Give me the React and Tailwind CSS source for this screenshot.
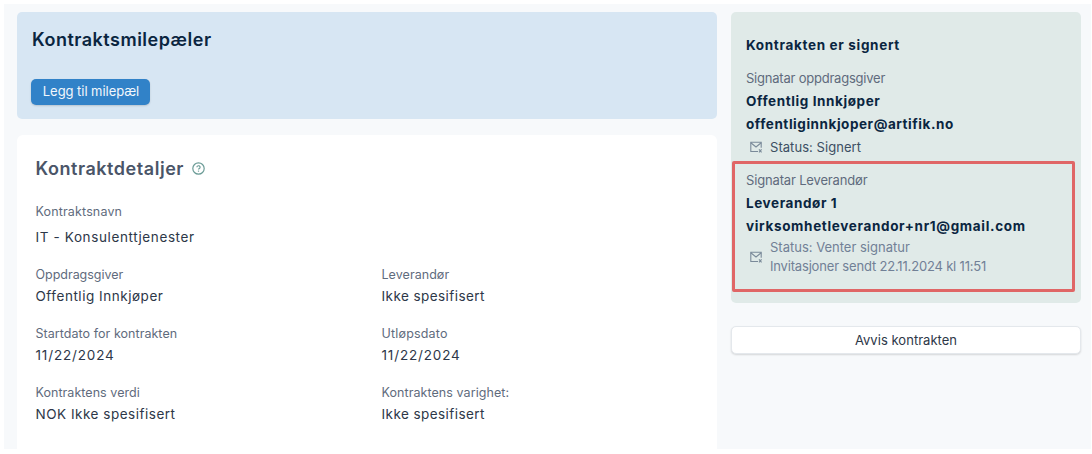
import clsx from "clsx";

const DETAILS = [
  {
    label: "Oppdragsgiver",
    labelClass: "tracking-[-0.02px]",
    value: "Offentlig Innkjøper",
    valueClass: "tracking-[0.53px]",
  },
  {
    label: "Leverandør",
    labelClass: "tracking-[0.05px]",
    value: "Ikke spesifisert",
    valueClass: "tracking-[0.43px]",
  },
  {
    label: "Startdato for kontrakten",
    labelClass: "tracking-[0.05px]",
    value: "11/22/2024",
    valueClass: "tracking-[0.85px]",
  },
  {
    label: "Utløpsdato",
    labelClass: "tracking-[0.18px]",
    value: "11/22/2024",
    valueClass: "tracking-[0.85px]",
  },
  {
    label: "Kontraktens verdi",
    labelClass: "tracking-[0.05px]",
    value: "NOK Ikke spesifisert",
    valueClass: "tracking-[0.51px]",
  },
  {
    label: "Kontraktens varighet:",
    labelClass: "tracking-[0.07px]",
    value: "Ikke spesifisert",
    valueClass: "tracking-[0.43px]",
  },
];

export default function App() {
  return (
    <div className="h-[454px] w-[1092px] overflow-hidden bg-white pt-1 pl-1 font-['Inter',sans-serif]">
      <div className="flex h-[445px] w-[1087px] gap-[14px] bg-[#f7f9fb] pt-2 pl-[13px]">
        <main className="flex w-[700px] flex-col gap-4">
          <Milestones />
          <ContractDetails />
        </main>
        <aside className="w-[350px]">
          <Signatures />
          <button className="mt-[23px] flex h-7 w-full items-center justify-center rounded-[5px] border border-[#e4e8ec] bg-white pt-px text-[13px] tracking-[0.03px] text-[#2d3748] shadow-[0_1px_2px_rgba(0,0,0,0.14)]">
            <span>Avvis kontrakten</span>
          </button>
        </aside>
      </div>
    </div>
  );
}

function Milestones() {
  return (
    <section className="h-[107px] rounded-[5px] bg-[#d7e6f3] pt-4 pl-[14px]">
      <h2 className="pl-px text-[18px] leading-6 font-semibold tracking-[0.5px] text-[#0a2540]">
        <span>Kontraktsmilepæler</span>
      </h2>
      <button className="mt-[27px] flex h-[26px] w-[119px] items-center justify-center rounded-[5px] bg-[#3182c8] pl-px text-[13px] tracking-[-0.05px] text-[#f1f7fc] shadow-[0_1px_2px_rgba(0,0,0,0.15)]">
        <span>Legg til milepæl</span>
      </button>
    </section>
  );
}

function ContractDetails() {
  return (
    <section className="h-[314px] rounded-t-[6px] bg-white pt-[22px] pl-[18.5px]">
      <div className="flex h-6 items-center gap-2">
        <h2 className="text-[18px] leading-6 font-semibold tracking-[0.54px] text-[#4a5568]">
          <span>Kontraktdetaljer</span>
        </h2>
        <HelpIcon />
      </div>
      <div className="mt-5 h-[63px]">
        <p className="text-[12.5px] leading-[22px] tracking-[0.15px] text-[#5f6b7d]">
          <span>Kontraktsnavn</span>
        </p>
        <p className="mt-[3px] text-[13.5px] leading-[22px] tracking-[0.62px] text-[#2d3748]">
          <span>IT - Konsulenttjenester</span>
        </p>
      </div>
      <dl className="grid grid-cols-[346px_1fr]">
        {DETAILS.map((d) => (
          <div key={d.label} className="h-[59px]">
            <dt className={clsx("text-[12.5px] leading-[22px] text-[#5f6b7d]", d.labelClass)}>
              <span>{d.label}</span>
            </dt>
            <dd className={clsx("text-[13.5px] leading-[21px] text-[#2d3748]", d.valueClass)}>
              <span>{d.value}</span>
            </dd>
          </div>
        ))}
      </dl>
    </section>
  );
}

function Signatures() {
  return (
    <section className="h-[291px] rounded-[5px] bg-[#e0eae8] pt-[22px] text-[13px] leading-[23px] text-[#0a2540]">
      <h3 className="pl-[15px] text-[13.5px] font-bold tracking-[0.67px]">
        <span>Kontrakten er signert</span>
      </h3>
      <div className="mt-[10px] pl-[15px]">
        <p className="tracking-[-0.22px] text-[#5f6b7d]">
          <span>Signatar oppdragsgiver</span>
        </p>
        <p className="text-[13.5px] font-bold tracking-[0.59px]">
          <span>Offentlig Innkjøper</span>
        </p>
        <p className="text-[13.5px] font-bold tracking-[0.55px]">
          <span>offentliginnkjoper@artifik.no</span>
        </p>
        <div className="flex h-[22px] items-center gap-2 pl-1 text-[#3c4f63]">
          <MailIcon />
          <span className="tracking-[0.05px]">Status: Signert</span>
        </div>
      </div>
      <div className="mt-[3px] ml-px h-[131px] w-[343px] rounded-[2px] border-[3px] border-[#e06666] pt-[5px] pl-[11px]">
        <p className="tracking-[-0.16px] text-[#5f6b7d]">
          <span>Signatar Leverandør</span>
        </p>
        <p className="text-[13.5px] font-bold tracking-[0.58px]">
          <span>Leverandør 1</span>
        </p>
        <p className="text-[13.5px] font-bold tracking-[0.66px]">
          <span>virksomhetleverandor+nr1@gmail.com</span>
        </p>
        <div className="flex items-center gap-2 pl-1 leading-[18.5px] text-[#718096]">
          <MailIcon />
          <div>
            <p>Status: Venter signatur</p>
            <p className="tracking-[-0.18px]">
              <span>Invitasjoner sendt 22.11.2024 kl 11:51</span>
            </p>
          </div>
        </div>
      </div>
    </section>
  );
}

function HelpIcon() {
  return (
    <svg className="h-[13px] w-[13px] -translate-y-px text-[#6c9c97]" viewBox="0 0 13 13" fill="none" stroke="currentColor">
      <circle cx="6.5" cy="6.5" r="5.7" strokeWidth="1.2" />
      <path d="M4.9 5.3a1.6 1.5 0 1 1 2.3 1.3c-.5.3-.7.5-.7 1" strokeWidth="1.2" />
      <path d="M6.5 8.6v1.1" strokeWidth="1.2" />
    </svg>
  );
}

function MailIcon() {
  return (
    <svg className="h-3 w-3 shrink-0 text-[#7a8a99]" viewBox="0 0 12 12" fill="none" stroke="currentColor">
      <path d="M8 10.5H.8V1.3h10.4v5.4" strokeWidth="1.1" />
      <path d="M.8 1.8 6 6l5.2-4.2" strokeWidth="1.1" />
      <path d="m9 8.3 2.6 3M11.6 8.3 9 11.3" strokeWidth="1.1" />
    </svg>
  );
}
